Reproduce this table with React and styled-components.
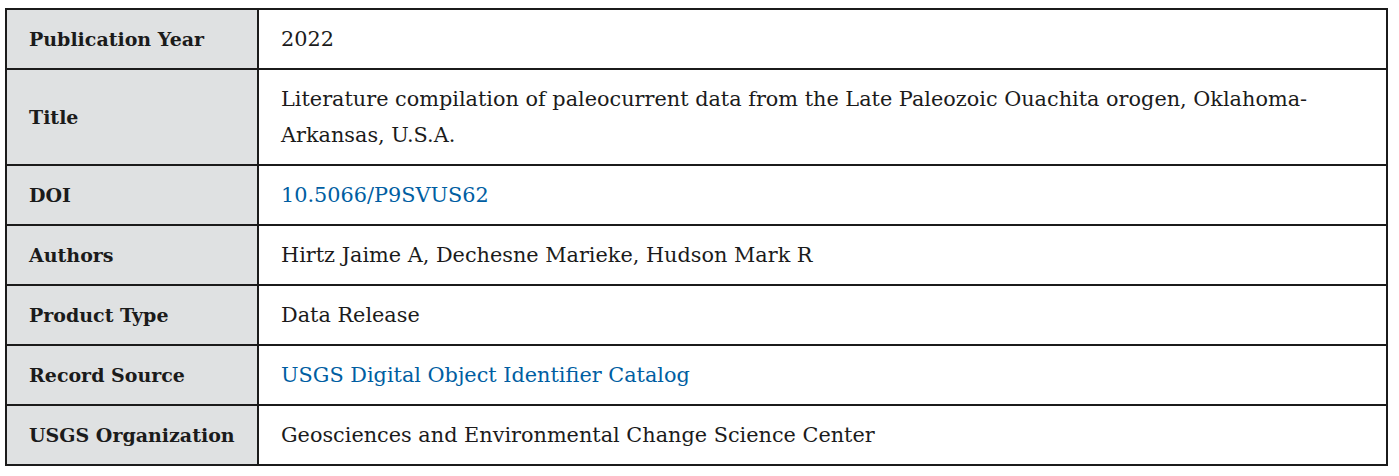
import React from "react";
import styled, { createGlobalStyle } from "styled-components";

const GlobalStyle = createGlobalStyle`
  body {
    margin: 0;
    background: #ffffff;
    font-family: "DejaVu Serif", "Liberation Serif", serif;
    color: #1b1b1b;
  }
`;

const Page = styled.div`
  padding: 8px 11px 0 5px;
`;

const MetaTable = styled.table`
  width: 100%;
  border-collapse: collapse;
  border: 2px solid #1b1b1b;
  line-height: 36px;
`;

const Row = styled.tr`
  border-bottom: 2px solid #1b1b1b;
`;

const Label = styled.th`
  width: 252px;
  box-sizing: border-box;
  padding: 11px 22px;
  text-align: left;
  font-size: 19px;
  font-weight: 700;
  white-space: nowrap;
  background: #dfe1e2;
  border-right: 2px solid #1b1b1b;
  vertical-align: middle;
`;

const Value = styled.td`
  padding: 11px 22px;
  font-size: 20.8px;
  vertical-align: middle;
`;

const Link = styled.a`
  color: #005ea2;
  text-decoration: none;
`;

const rows = [
  { label: "Publication Year", value: "2022" },
  {
    label: "Title",
    value:
      "Literature compilation of paleocurrent data from the Late Paleozoic Ouachita orogen, Oklahoma-Arkansas, U.S.A.",
  },
  { label: "DOI", value: "10.5066/P9SVUS62", link: true },
  { label: "Authors", value: "Hirtz Jaime A, Dechesne Marieke, Hudson Mark R" },
  { label: "Product Type", value: "Data Release" },
  { label: "Record Source", value: "USGS Digital Object Identifier Catalog", link: true },
  { label: "USGS Organization", value: "Geosciences and Environmental Change Science Center" },
];

const App = () => {
  return (
    <>
      <GlobalStyle />
      <Page>
        <MetaTable>
          <tbody>
            {rows.map((row, idx) => (
              <Row key={idx}>
                <Label>{row.label}</Label>
                <Value>
                  {row.link ? <Link href="#">{row.value}</Link> : row.value}
                </Value>
              </Row>
            ))}
          </tbody>
        </MetaTable>
      </Page>
    </>
  );
};

export default App;
